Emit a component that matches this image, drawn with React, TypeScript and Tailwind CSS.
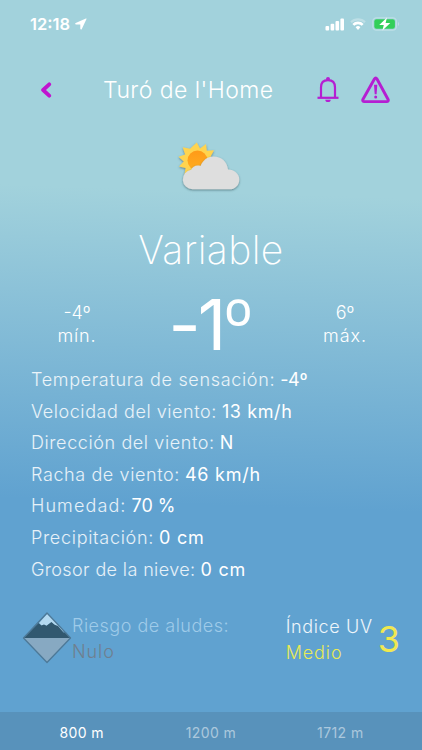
import clsx from "clsx";

const details = [
  { label: "Temperatura de sensación:", value: "-4º", tracking: "tracking-[0.66px]", valueTracking: "tracking-[-0.3px]" },
  { label: "Velocidad del viento:", value: "13 km/h", tracking: "tracking-[0.56px]", valueTracking: "tracking-[0.6px]" },
  { label: "Dirección del viento:", value: "N", tracking: "tracking-[0.6px]", valueTracking: "tracking-[0.6px]" },
  { label: "Racha de viento:", value: "46 km/h", tracking: "tracking-[0.6px]", valueTracking: "tracking-[0.75px]" },
  { label: "Humedad:", value: "70 %", tracking: "tracking-[1.1px]", valueTracking: "tracking-[0px]" },
  { label: "Precipitación:", value: "0 cm", tracking: "tracking-[0.7px]", valueTracking: "tracking-[0.8px]" },
  { label: "Grosor de la nieve:", value: "0 cm", tracking: "tracking-[0.38px]", valueTracking: "tracking-[0.8px]" },
];

const altitudes = [
  { label: "800 m", active: true },
  { label: "1200 m", active: false },
  { label: "1712 m", active: false },
];

function StatusBar() {
  return (
    <div className="flex h-12 items-center pl-[30px] pr-[22px] text-white">
      <span className="text-[16.5px] font-semibold leading-none">12:18</span>
      <svg className="ml-[5px]" width="12" height="12" viewBox="0 0 12 12" fill="currentColor">
        <path d="M10.9.5.7 4.9c-.8.4-.6 1.5.3 1.5h4.3v4.4c0 .9 1.100 1.100 1.500.3L11.500 1.100c.2-.5-.2-.8-.6-.6Z" />
      </svg>
      <div className="ml-auto flex items-center">
        <svg width="20" height="13" viewBox="0 0 20 13" fill="currentColor">
          <rect x="0.5" y="8" width="3.6" height="4.4" rx="1" />
          <rect x="5.6" y="5.8" width="3.6" height="6.6" rx="1" />
          <rect x="10.5" y="3.1" width="3.6" height="9.3" rx="1" />
          <rect x="15.4" y="0.4" width="3.6" height="12" rx="1" />
        </svg>
        <svg className="ml-[5px]" width="16" height="12" viewBox="0 0 16 12" fill="none" stroke="currentColor">
          <path d="M1 4.2a10 10 0 0 1 14 0" strokeWidth="2.2" opacity="0.3" />
          <path d="M3.3 6.8a6.6 6.6 0 0 1 9.4 0" strokeWidth="2.6" />
          <path d="M5.6 9.3a3.4 3.4 0 0 1 4.8 0L8 11.9Z" fill="currentColor" stroke="none" />
        </svg>
        <svg className="ml-[6px]" width="28" height="14" viewBox="0 0 28 14" fill="none">
          <rect x="0.8" y="0.8" width="23.6" height="12.4" rx="3.6" stroke="#fff" strokeOpacity="0.3" strokeWidth="1.2" />
          <rect x="2.3" y="2.2" width="20.6" height="9.6" rx="2.2" fill="#32cf5a" />
          <path d="M26 5v4c1.2-.6 1.2-3.4 0-4Z" fill="#fff" fillOpacity="0.4" />
          <path d="M15 .6 7.2 7.9h4.6l-1.4 5.5 7.9-7.5h-4.7Z" fill="#fff" />
        </svg>
      </div>
    </div>
  );
}

function Header() {
  return (
    <div className="flex h-[84px] items-center pl-[40px] pr-[31px]">
      <svg width="12" height="17" viewBox="0 0 12 17" fill="none" stroke="#c014cf" strokeWidth="3.8" strokeLinecap="round" strokeLinejoin="round">
        <path d="M9.2 2.3 3.1 8l6.1 5.7" />
      </svg>
      <h1 className="ml-[51px] w-[172px] whitespace-nowrap text-[23px] font-light leading-8 tracking-[0.45px] text-white">
        Turó de l'Home
      </h1>
      <svg className="ml-[41px]" width="24" height="28" viewBox="0 0 24 28" fill="none" stroke="#b51fd2" strokeWidth="2.2">
        <path d="M1.5 21.8h21" />
        <path d="M5 21.5v-10c0-4.700 2.700-7.300 7-7.300s7 2.600 7 7.300v10" />
        <path d="M10 3.8V3a2 2 0 0 1 4 0v.8Z" fill="#b51fd2" stroke="none" />
        <path d="M9.300 23.800h5.400a2.700 2.300 0 0 1-5.400 0Z" fill="#b51fd2" stroke="none" />
      </svg>
      <svg className="ml-[21px] shrink-0" width="30" height="28" viewBox="0 0 30 28" fill="none" stroke="#b51fd2">
        <path d="M13.400 3 2 23.200c-.7 1.300 0 2.400 1.400 2.400h22.200c1.400 0 2.100-1.100 1.400-2.400L16 3c-.8-1.300-1.800-1.300-2.600 0Z" strokeWidth="2.900" strokeLinejoin="round" />
        <path d="M13 8.700h3.300l-.7 9.500h-1.900Z" fill="#b51fd2" stroke="none" />
        <circle cx="14.700" cy="21" r="1.500" fill="#b51fd2" stroke="none" />
      </svg>
    </div>
  );
}

function WeatherIcon() {
  return (
    <svg className="mx-auto block" width="68" height="60" viewBox="0 0 68 60">
      <defs>
        <filter id="shadow" x="-20%" y="-20%" width="140%" height="150%">
          <feDropShadow dx="0" dy="1" stdDeviation="1.1" floodColor="#35545c" floodOpacity="0.65" />
        </filter>
        <linearGradient id="sun" x1="0" y1="0" x2="0" y2="1">
          <stop offset="0" stopColor="#ff9a18" />
          <stop offset="1" stopColor="#ffad20" />
        </linearGradient>
      </defs>
      <path
        d="M19.8 6.5 23 12.500 29 8l.8 6.800 7.200-.5-3.400 6.200 5.400 3.500-5 4 2.700 6.500-7.200-.5-1.500 6.500-6-3.500-4.500 5-3.700-5.800-6.400 2.300 1.300-6.500L2 30.500l4.800-5-5.300-4.800 6.700-2.200-2.500-7.300 7.300 1.600Z"
        fill="#ffd450"
        filter="url(#shadow)"
      />
      <circle cx="20.500" cy="24.500" r="10" fill="url(#sun)" />
      <path
        d="M15.500 53.300a9.800 9.800 0 0 1-1.300-19.500c1.300-3.700 5.500-5.300 9.300-3.900 2.800-5.700 6.500-9.400 13-9.400 7.800 0 13.800 5.300 14.500 13.100 6.500.2 11.300 4.500 11.300 9.800 0 5.700-4.300 9.900-9.800 9.900Z"
        fill="#dedede"
        filter="url(#shadow)"
      />
    </svg>
  );
}

function MountainIcon() {
  return (
    <svg className="shrink-0" width="50" height="52" viewBox="0 0 50 52">
      <path d="M25 1 1.500 26h47Z" fill="#5f9fca" />
      <path d="M25.500 1.500 17 11l2.500 2.800 2.500-1 2.500 1.200 4.500-3.500 4 2.500 9 8-1.500-3.500Z" fill="#b3d9f0" />
      <path d="M1.500 26 16.500 11l3 2.500 2.500-1 2.500 1.200 5-3.700 3 2.700 3.500 1.300 5.500 6.500h2.500L48.500 26Z" fill="#31586f" />
      <path d="M1.500 26h47L25 50.500Z" fill="#87a9c2" />
      <path d="M25 1 48.500 26 25 50.500 1.500 26Z" fill="none" stroke="#4d7998" strokeWidth="1.3" strokeLinejoin="round" />
    </svg>
  );
}

export default function App() {
  return (
    <main className="flex h-[750px] w-[422px] flex-col overflow-hidden bg-[linear-gradient(182deg,#a2d2dc_0%,#a2d2dc_26%,#60a2d0_67%,#60a2d0_100%)] font-['Inter',sans-serif]">
      <StatusBar />
      <Header />

      <section className="flex flex-col pt-[4px]">
        <WeatherIcon />
        <h2 className="mt-[30px] text-center text-[39px] font-extralight leading-[48px] tracking-[0.4px] text-white">
          Variable
        </h2>
        <div className="flex h-[88px] justify-between px-[27px] pt-[27px] text-center text-[18px] font-light leading-[23px] text-white">
          <div className="w-[100px]">
            <p>-4º</p>
            <p className="tracking-[0.9px]">mín.</p>
          </div>
          <p className="-mt-[14px] whitespace-nowrap text-[70px] font-normal leading-[76px] tracking-[-3px]">
            -1<span className="font-light tracking-normal">º</span>
          </p>
          <div className="w-[100px]">
            <p>6º</p>
            <p className="tracking-[0.9px]">máx.</p>
          </div>
        </div>
      </section>

      <dl className="mt-[2px] pl-[31px] text-[18px] leading-[31.6px] text-white">
        {details.map((item) => (
          <div key={item.label} className="flex gap-[5px] whitespace-nowrap">
            <dt className={clsx("font-light text-white/85", item.tracking)}>{item.label}</dt>
            <dd className={clsx("font-normal", item.valueTracking)}>{item.value}</dd>
          </div>
        ))}
      </dl>

      <section className="mt-[27px] flex items-start pl-[22px] pr-[23px] text-[18px] font-light leading-[26px]">
        <MountainIcon />
        <div className="whitespace-nowrap pt-px">
          <p className="tracking-[0.5px] text-[#9fcbe9]">Riesgo de aludes:</p>
          <p className="tracking-[0.9px] text-[#6f7f8f]">Nulo</p>
        </div>
        <div className="ml-auto whitespace-nowrap pt-[2px]">
          <p className="tracking-[0.65px] text-white/90">Índice UV</p>
          <p className="tracking-[0.9px] text-[#e9ea55]">Medio</p>
        </div>
        <span className="ml-[5px] pt-[7px] text-[36px] font-normal leading-[40px] tracking-[-1px] text-[#f0e850]">3</span>
      </section>

      <nav className="mt-auto grid h-[38px] grid-cols-3 bg-[#5892bb] px-[17px] text-center text-[14px] leading-[42px] tracking-[0.4px] text-white/50">
        {altitudes.map((item) => (
          <button key={item.label} className={clsx(item.active && "text-white")}>
            {item.label}
          </button>
        ))}
      </nav>
    </main>
  );
}
